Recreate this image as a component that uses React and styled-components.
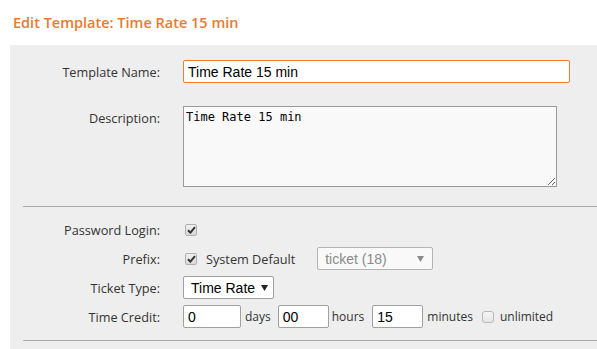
import React from "react";
import styled, { createGlobalStyle } from "styled-components";

const GlobalStyle = createGlobalStyle`
  html, body {
    margin: 0;
    padding: 0;
    background: #ffffff;
  }
  body {
    font-family: "Open Sans", "Noto Sans", sans-serif;
    color: #333;
  }
`;

const Page = styled.div`
  width: 597px;
  height: 349px;
  overflow: hidden;
  padding-left: 10px;
  box-sizing: border-box;
`;

const Title = styled.h2`
  margin: 0;
  padding: 13px 0 0 3px;
  height: 45px;
  box-sizing: border-box;
  font-size: 14.5px;
  font-weight: 600;
  color: #ea7a2e;
`;

const Panel = styled.div`
  background: #eeeeee;
  padding: 15px 0 0 13px;
  min-height: 304px;
  box-sizing: border-box;
`;

const Section = styled.div`
  display: flex;
  flex-direction: column;
  gap: ${(p) => p.gap || 0}px;
  padding: ${(p) => p.pad || "0"};
`;

const Row = styled.div`
  display: grid;
  grid-template-columns: 137px auto;
  column-gap: 23px;
  align-items: ${(p) => (p.top ? "start" : "center")};
  height: ${(p) => (p.h ? `${p.h}px` : "auto")};
`;

const Label = styled.label`
  text-align: right;
  font-size: 12.7px;
  color: #333;
  line-height: ${(p) => (p.top ? "24px" : "16px")};
  white-space: nowrap;
`;

const Field = styled.div`
  display: flex;
  align-items: center;
  font-size: 12px;
  color: #333;
`;

const TextInput = styled.input`
  font-family: "Liberation Sans", Arial, sans-serif;
  font-size: 14px;
  color: #000;
  height: 23px;
  width: ${(p) => p.w}px;
  box-sizing: border-box;
  padding: 0 4px;
  border: 1px solid ${(p) => (p.focus ? "#ee7d2f" : "#a0a0a0")};
  border-radius: 2px;
  background: #fff;
  outline: none;
  margin: 0;
  flex: none;
`;

const TextArea = styled.textarea`
  font-family: "DejaVu Sans Mono", "Liberation Mono", monospace;
  font-size: 12px;
  color: #000;
  width: 374px;
  height: 81px;
  box-sizing: border-box;
  padding: 3px 2px;
  border: 1px solid #9a9a9a;
  background: #f9f9f9;
  margin: 0;
  outline: none;
  resize: both;
`;

const Separator = styled.hr`
  border: none;
  border-top: 1px solid #aaaaaa;
  margin: 0;
  height: 0;
`;

const Check = styled.span`
  display: inline-flex;
  align-items: center;
  justify-content: center;
  width: 12px;
  height: 12px;
  box-sizing: border-box;
  margin-left: ${(p) => (p.off ? 0 : 2)}px;
  border: 1px solid ${(p) => (p.off ? "#b8b8b8" : "#b0b0b0")};
  border-radius: ${(p) => (p.off ? 3 : 2)}px;
  background: ${(p) =>
    p.off ? "linear-gradient(#f6f6f6, #e4e4e4)" : "linear-gradient(#f0f0f0, #d8d8d8)"};
  flex: none;
`;

const Tick = () => (
  <svg width="9" height="8" viewBox="0 0 9 8">
    <path d="M1 4.2 L3.4 6.6 L8 1.2" fill="none" stroke="#333" strokeWidth="2" />
  </svg>
);

const Select = styled.div`
  display: flex;
  align-items: center;
  justify-content: space-between;
  box-sizing: border-box;
  width: ${(p) => p.w}px;
  height: 23px;
  padding: 0 ${(p) => (p.disabled ? 8 : 5)}px 0 7px;
  border: 1px solid ${(p) => (p.disabled ? "#b4b4b4" : "#a0a0a0")};
  border-radius: 2px;
  background: ${(p) => (p.disabled ? "#f9f9f9" : "#fff")};
  color: ${(p) => (p.disabled ? "#8a8a8a" : "#000")};
  font-family: "Liberation Sans", Arial, sans-serif;
  font-size: 14px;
  flex: none;
`;

const Arrow = ({ disabled }) => (
  <svg width="7" height="6" viewBox="0 0 7 6">
    <path d="M0 0 H7 L3.5 6 Z" fill={disabled ? "#8a8a8a" : "#222"} />
  </svg>
);

const Unit = styled.span`
  color: #333;
  white-space: nowrap;
  font-size: ${(p) => p.size || 12}px;
  margin: 0 ${(p) => p.r ?? 4}px 0 ${(p) => p.l ?? 4}px;
`;

export default function App() {
  return (
    <Page>
      <GlobalStyle />
      <Title>Edit Template: Time Rate 15 min</Title>
      <Panel>
        <Section gap={23} pad="0 0 19px 0">
          <Row>
            <Label>Template Name:</Label>
            <Field>
              <TextInput w={387} focus defaultValue="Time Rate 15 min" />
            </Field>
          </Row>
          <Row top>
            <Label top>Description:</Label>
            <Field>
              <TextArea defaultValue="Time Rate 15 min" />
            </Field>
          </Row>
        </Section>
        <Separator />
        <Section pad="8px 0 9px 0">
          <Row h={29}>
            <Label>Password Login:</Label>
            <Field>
              <Check>
                <Tick />
              </Check>
            </Field>
          </Row>
          <Row h={29}>
            <Label>Prefix:</Label>
            <Field>
              <Check>
                <Tick />
              </Check>
              <Unit size={12.7} l={9} r={22}>System Default</Unit>
              <Select w={116} disabled>
                <span>ticket (18)</span>
                <Arrow disabled />
              </Select>
            </Field>
          </Row>
          <Row h={29}>
            <Label>Ticket Type:</Label>
            <Field>
              <Select w={91}>
                <span>Time Rate</span>
                <Arrow />
              </Select>
            </Field>
          </Row>
          <Row h={29}>
            <Label>Time Credit:</Label>
            <Field>
              <TextInput w={58} defaultValue="0" />
              <Unit l={4} r={7}>days</Unit>
              <TextInput w={51} defaultValue="00" />
              <Unit l={3} r={8}>hours</Unit>
              <TextInput w={51} defaultValue="15" />
              <Unit l={4} r={9}>minutes</Unit>
              <Check off />
              <Unit l={6}>unlimited</Unit>
            </Field>
          </Row>
        </Section>
        <Separator />
      </Panel>
    </Page>
  );
}
